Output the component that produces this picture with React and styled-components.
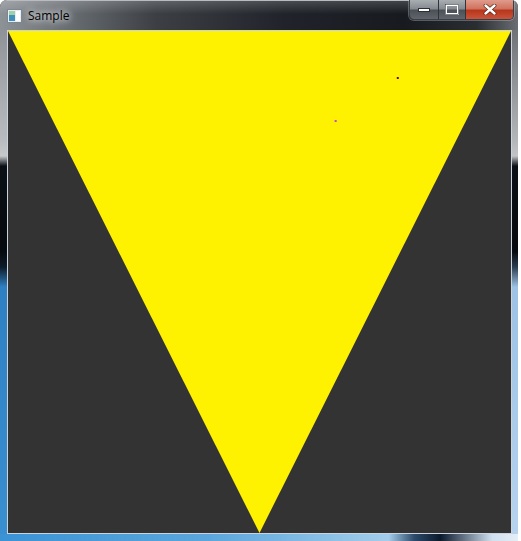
import styled, { createGlobalStyle } from "styled-components";

const GlobalStyle = createGlobalStyle`
  html, body {
    margin: 0;
    padding: 0;
    background: #ffffff;
  }
`;

export default function App() {
  return (
    <>
      <GlobalStyle />
      <Window>
        <TitleBar>
          <TitleLeft>
            <AppIcon width="15" height="14" viewBox="0 0 15 14">
              <rect x="0.5" y="0.5" width="14" height="13" fill="#e9eef2" stroke="#7d8791" />
              <rect x="2" y="2" width="6" height="10" fill="#3f8fb8" />
              <rect x="2" y="2" width="6" height="4" fill="#9fd0a8" />
              <rect x="9" y="2" width="4" height="10" fill="#ffffff" />
            </AppIcon>
            <Title>Sample</Title>
          </TitleLeft>
          <Controls>
            <CtrlButton kind="min">
              <svg width="12" height="4" viewBox="0 0 12 4">
                <rect x="0.5" y="0.5" width="11" height="3" fill="#fff" stroke="#2b3036" />
              </svg>
            </CtrlButton>
            <CtrlButton kind="max">
              <svg width="14" height="11" viewBox="0 0 14 11">
                <rect x="1" y="1" width="12" height="9" fill="none" stroke="#fff" strokeWidth="2" />
                <rect x="0.5" y="0.5" width="13" height="10" fill="none" stroke="#2b3036" strokeWidth="0.6" />
              </svg>
            </CtrlButton>
            <CtrlButton kind="close">
              <svg width="14" height="11" viewBox="0 0 14 11">
                <path d="M2.5 1.5 L11.5 9.5 M11.5 1.5 L2.5 9.5" stroke="#5a2418" strokeWidth="3.8" strokeLinecap="round" />
                <path d="M2.5 1.5 L11.5 9.5 M11.5 1.5 L2.5 9.5" stroke="#ffffff" strokeWidth="2.4" strokeLinecap="round" />
              </svg>
            </CtrlButton>
          </Controls>
        </TitleBar>
        <Middle>
          <SideBorder side="left" />
          <ClientFrame>
            <Canvas viewBox="0 0 502 502" preserveAspectRatio="none">
              <polygon points="0,0 502,0 251,502" fill="#fff200" />
              <rect x="388" y="46" width="2" height="2" fill="#5a0a46" />
              <rect x="326" y="89" width="2" height="2" fill="#d43ce0" />
            </Canvas>
          </ClientFrame>
          <SideBorder side="right" />
        </Middle>
        <BottomBorder />
      </Window>
    </>
  );
}

// ---------------------css

const Window = styled.div`
  width: 518px;
  height: 541px;
  display: flex;
  flex-direction: column;
  border-radius: 7px 7px 0 0;
  overflow: hidden;
  background: #1a1e23;
`;

const TitleBar = styled.div`
  height: 30px;
  flex-shrink: 0;
  display: flex;
  align-items: flex-start;
  justify-content: space-between;
  background:
    linear-gradient(to bottom, rgba(255, 255, 255, 0.18) 0%, rgba(255, 255, 255, 0) 45%),
    linear-gradient(to right, #8d9297 0%, #6c7176 12%, #3c4045 30%, #20242a 55%, #171b20 78%, #2a2e33 92%, #6a6e72 100%);
  border-top: 1px solid #b8bcc0;
  box-sizing: border-box;
`;

const TitleLeft = styled.div`
  display: flex;
  align-items: center;
  gap: 6px;
  padding: 6px 0 0 7px;
`;

const AppIcon = styled.svg`
  display: block;
`;

const Title = styled.span`
  font-family: "Open Sans", "Noto Sans", sans-serif;
  font-size: 12px;
  color: #000;
  padding: 0 14px 0 0;
  text-shadow: 0 0 6px rgba(255, 255, 255, 0.9), 0 0 10px rgba(255, 255, 255, 0.7);
`;

const Controls = styled.div`
  display: flex;
  margin: -1px 4px 0 0;
  border: 1px solid #3a3f45;
  border-top: none;
  border-radius: 0 0 5px 5px;
  overflow: hidden;
  box-shadow: 0 0 0 1px rgba(200, 205, 210, 0.35);
`;

const CtrlButton = styled.div`
  height: 19px;
  width: ${(p) => (p.kind === "close" ? "48px" : p.kind === "max" ? "27px" : "28px")};
  display: flex;
  align-items: center;
  justify-content: center;
  box-sizing: border-box;
  border-left: ${(p) => (p.kind === "min" ? "none" : "1px solid #2f3439")};
  background: ${(p) =>
    p.kind === "close"
      ? "linear-gradient(to bottom, #e09b8c 0%, #d0735e 45%, #b8361c 55%, #c9543a 100%)"
      : "linear-gradient(to bottom, #a9aeb3 0%, #868b91 45%, #4c5157 55%, #60666c 100%)"};
`;

const Middle = styled.div`
  flex: 1;
  display: flex;
  min-height: 0;
`;

const SideBorder = styled.div`
  width: ${(p) => (p.side === "left" ? "7px" : "6px")};
  flex-shrink: 0;
  background: ${(p) =>
    p.side === "left"
      ? "linear-gradient(to bottom, #8f9398 0%, #b9bcbf 22%, #c6c8ca 25%, #0b1016 27%, #060a0f 44%, #0d1a28 47%, #2f80c2 51%, #3a8fd0 100%)"
      : "linear-gradient(to bottom, #6f7377 0%, #b4b7ba 22%, #c2c4c6 25%, #0b1016 27%, #060a0f 44%, #2a3c4f 47%, #9ec2e4 51%, #b6d3ee 100%)"};
`;

const ClientFrame = styled.div`
  flex: 1;
  border: 1px solid #c9d4df;
  background: #333333;
  display: flex;
`;

const Canvas = styled.svg`
  display: block;
  width: 100%;
  height: 100%;
`;

const BottomBorder = styled.div`
  height: 7px;
  flex-shrink: 0;
  background: linear-gradient(to right, #3b93d4 0%, #5aa6dc 40%, #a3cdea 75%, #2c4a6a 80%, #0b1a2c 85%, #cfe0ef 95%, #e6eef6 100%);
`;
